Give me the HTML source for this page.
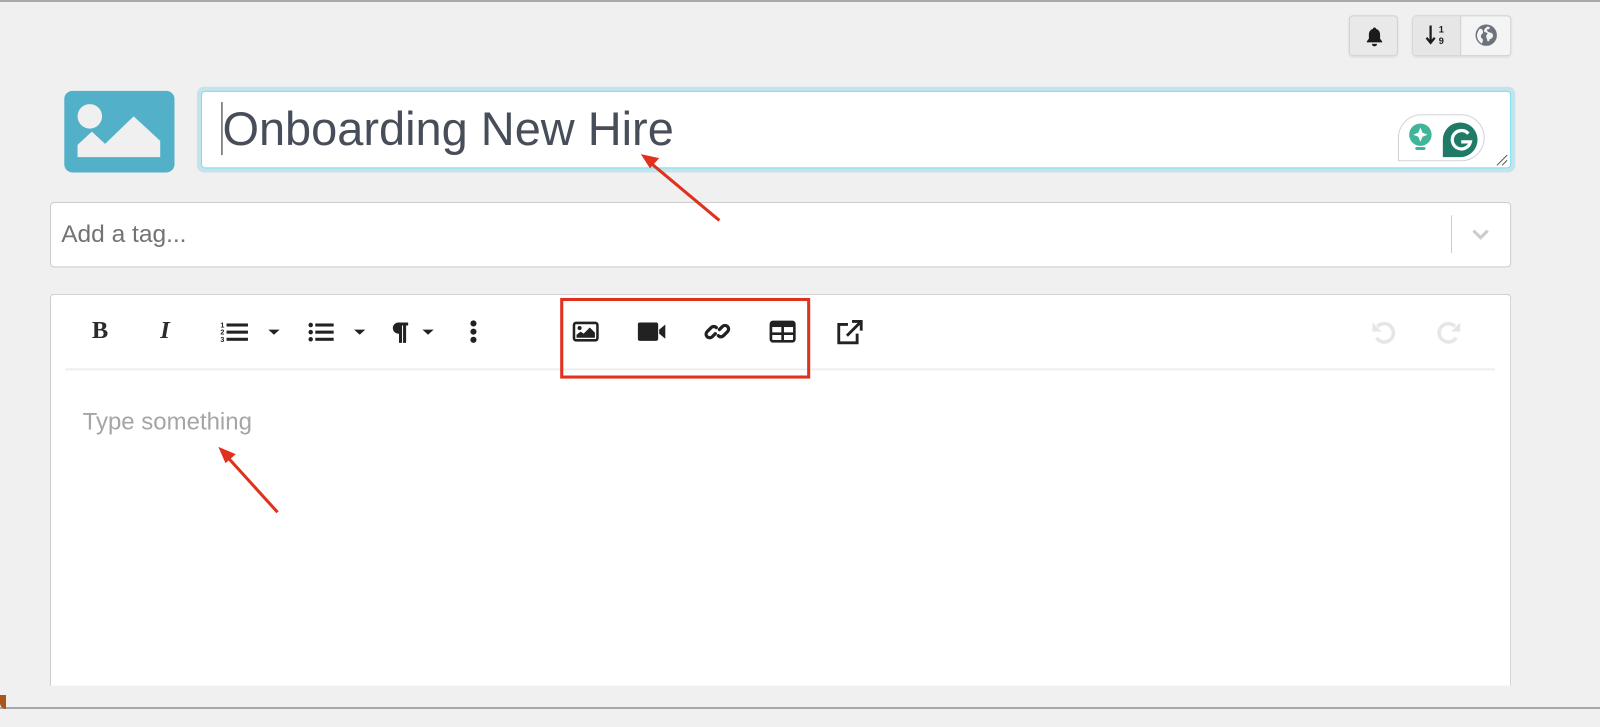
<!DOCTYPE html>
<html><head><meta charset="utf-8"><style>
*{box-sizing:border-box;margin:0;padding:0}
body{width:1600px;height:709px;background:#f0f0f0;position:relative;overflow:hidden;font-family:"Liberation Sans",sans-serif}
.a{position:absolute}
#w{position:absolute;left:0;top:0;width:1568px;height:695px;transform:scale(1.0204);transform-origin:0 0}
.btn{background:#e9e9e9;border:1px solid #cfd3d6;border-radius:4px;box-shadow:0 1px 2px rgba(0,0,0,.08)}
svg{display:block}
</style></head><body>
<div id="w">
<!-- top buttons -->
<div class="a btn" style="left:1322px;top:15px;width:48px;height:40px">
<svg class="a" style="left:15px;top:10px" width="18" height="20" viewBox="0 0 18 20"><path d="M9 1c1 0 1.5.6 1.5 1.3C13 3 14.5 5 14.5 8v4l2 2.5v1H1.5v-1l2-2.5V8C3.5 5 5 3 7.5 2.3 7.5 1.6 8 1 9 1z" fill="#1b1b1b"/><path d="M6.5 17h5a2.5 2.5 0 0 1-5 0z" fill="#1b1b1b"/></svg></div>
<div class="a btn" style="left:1384px;top:15px;width:97px;height:40px;background:#f4f4f4"></div>
<div class="a" style="left:1385px;top:16px;width:47px;height:38px;background:#e6e6e6;border-right:1px solid #cfd3d6"></div>
<svg class="a" style="left:1397px;top:23px" width="22" height="24" viewBox="0 0 22 24"><path d="M5 2v16M1 14l4 5 4-5" stroke="#1b1b1b" stroke-width="2.2" fill="none"/><text x="13" y="9" font-size="9" font-weight="bold" fill="#1b1b1b" font-family="Liberation Sans">1</text><text x="13" y="20" font-size="9" font-weight="bold" fill="#1b1b1b" font-family="Liberation Sans">9</text></svg>
<svg class="a" style="left:1446px;top:24px" width="21" height="21" viewBox="0 0 20 20"><circle cx="10" cy="10" r="10" fill="#6c737b"/><path d="M4 4c2 0 3 1 3 3s-2 2-2 4 2 2 2 4l-1 3C3 16 1 13 1.5 9 2 7 3 5 4 4zM11 2c2 0 3 1 2 2s-3 0-2 2 4 1 5 3 0 3-1 4-2 0-2 2c-1 1-2 1-2 0 0-2-1-2-1-4s2-2 1-3-3 0-3-2 2-3 3-4z" fill="#f4f4f4"/></svg>

<!-- image icon -->
<div class="a" style="left:63px;top:89px;width:108px;height:80px;background:#52b1c9;border-radius:8px"></div>
<svg class="a" style="left:63px;top:89px" width="108" height="80" viewBox="0 0 108 80"><circle cx="25" cy="25" r="12" fill="#f0f0f0"/><path d="M13 65V53l14-13 13 12 28-27 26 24v16z" fill="#f0f0f0"/></svg>

<!-- title -->
<div class="a" style="left:193px;top:85px;width:1292px;height:84px;border-radius:7px;background:#c5e3ea"></div>
<div class="a" style="left:197px;top:89px;width:1284px;height:76px;background:#fff;border:1px solid #6fe0f7;border-radius:4px"></div>
<div class="a" style="left:217px;top:100px;width:1px;height:52px;background:#222"></div>
<div class="a" style="left:218px;top:99px;font-size:46px;color:#474e59">Onboarding New Hire</div>
<div class="a" style="left:1370px;top:112px;width:85px;height:46px;border:1px solid #d0d3d8;border-radius:23px 23px 23px 0;background:#fff"></div>
<svg class="a" style="left:1379px;top:119px" width="30" height="34" viewBox="0 0 30 34"><circle cx="13" cy="13" r="11" fill="#3fb59a"/><path d="M13 6l2 5 5 2-5 2-2 5-2-5-5-2 5-2z" fill="#fff"/><rect x="8" y="25" width="10" height="3" rx="1.5" fill="#3fb59a"/></svg>
<svg class="a" style="left:1413px;top:119px" width="36" height="36" viewBox="0 0 36 36"><path d="M18 1a17 17 0 1 1 0 34H1V18A17 17 0 0 1 18 1z" fill="#1f7b66"/><path d="M26 12a9 9 0 1 0 2 8h-9" stroke="#fff" stroke-width="3.2" fill="none"/></svg>
<svg class="a" style="left:1466px;top:151px" width="12" height="12"><path d="M1 11L11 1M6 11L11 6" stroke="#555" stroke-width="1"/></svg>

<!-- tag -->
<div class="a" style="left:49px;top:198px;width:1432px;height:64px;background:#fff;border:1px solid #cccccc;border-radius:4px"></div>
<div class="a" style="left:60px;top:216px;font-size:24px;color:#737373">Add a tag...</div>
<div class="a" style="left:1422px;top:211px;width:1px;height:37px;background:#ccc"></div>
<svg class="a" style="left:1441px;top:223px" width="20" height="14"><path d="M3 3l7 7 7-7" stroke="#ccc" stroke-width="3" fill="none"/></svg>

<!-- editor -->
<div class="a" style="left:49px;top:288px;width:1432px;height:420px;background:#fff;border:1px solid #cccccc;border-radius:4px 4px 0 0;border-bottom:none"></div>
<div class="a" style="left:49px;top:672px;width:1432px;height:40px;background:#f0f0f0"></div>
<div class="a" style="left:64px;top:361px;width:1401px;height:2px;background:#eeeeee"></div>

<div class="a" style="left:90px;top:311px;font-size:24px;font-weight:bold;font-family:'Liberation Serif',serif;color:#2b2b2b">B</div>
<div class="a" style="left:157px;top:311px;font-size:24px;font-style:italic;font-weight:bold;font-family:'Liberation Serif',serif;color:#2b2b2b">I</div>
<svg class="a" style="left:216px;top:314px" width="70" height="24" viewBox="0 0 70 24"><text x="0" y="7" font-size="7" font-weight="bold" fill="#222">1</text><text x="0" y="14" font-size="7" font-weight="bold" fill="#222">2</text><text x="0" y="21" font-size="7" font-weight="bold" fill="#222">3</text><rect x="6" y="3" width="21" height="3" fill="#222"/><rect x="6" y="10" width="21" height="3" fill="#222"/><rect x="6" y="17" width="21" height="3" fill="#222"/><path d="M47 9h11l-5.5 5z" fill="#222"/></svg>
<svg class="a" style="left:302px;top:314px" width="64" height="24" viewBox="0 0 64 24"><circle cx="2.5" cy="4.5" r="2.2" fill="#222"/><circle cx="2.5" cy="11.5" r="2.2" fill="#222"/><circle cx="2.5" cy="18.5" r="2.2" fill="#222"/><rect x="7" y="3" width="18" height="3" fill="#222"/><rect x="7" y="10" width="18" height="3" fill="#222"/><rect x="7" y="17" width="18" height="3" fill="#222"/><path d="M45 9h11l-5.5 5z" fill="#222"/></svg>
<svg class="a" style="left:383px;top:314px" width="46" height="24" viewBox="0 0 46 24"><path d="M7 2h10v3h-2v17h-3V5h-1v17H8v-9a5.5 5.5 0 0 1-1-11z" fill="#222"/><path d="M31 9h11l-5.5 5z" fill="#222"/></svg>
<svg class="a" style="left:458px;top:313px" width="12" height="26"><circle cx="6" cy="4" r="3" fill="#222"/><circle cx="6" cy="12" r="3" fill="#222"/><circle cx="6" cy="20" r="3" fill="#222"/></svg>

<svg class="a" style="left:561px;top:315px" width="26" height="20" viewBox="0 0 26 20"><rect x="1.5" y="1.5" width="23" height="17" rx="2" fill="none" stroke="#222" stroke-width="2.5"/><circle cx="7" cy="6.5" r="2" fill="#222"/><path d="M4 16v-3l4-3 3 2 6-6 5 5v5z" fill="#222"/></svg>
<svg class="a" style="left:625px;top:315px" width="28" height="20" viewBox="0 0 28 20"><rect x="0" y="1" width="20" height="18" rx="2" fill="#222"/><path d="M21 8l6-5v14l-6-5z" fill="#222"/></svg>
<svg class="a" style="left:690px;top:312px" width="26" height="26" viewBox="0 0 26 26"><path d="M11 15l-3 3a3.5 3.5 0 0 1-5-5l4-4a3.5 3.5 0 0 1 5 0M15 11l3-3a3.5 3.5 0 0 1 5 5l-4 4a3.5 3.5 0 0 1-5 0" stroke="#222" stroke-width="3.2" fill="none" stroke-linecap="round"/></svg>
<svg class="a" style="left:754px;top:314px" width="26" height="22" viewBox="0 0 26 22"><rect x="1.5" y="1.5" width="23" height="19" rx="2" fill="none" stroke="#222" stroke-width="2.6"/><rect x="1.5" y="1.5" width="23" height="5" fill="#222"/><path d="M13 6v14M2 13h22" stroke="#222" stroke-width="2.6"/></svg>
<svg class="a" style="left:819px;top:313px" width="28" height="26" viewBox="0 0 28 26"><path d="M12 5H3v18h18v-9" stroke="#222" stroke-width="2.8" fill="none"/><path d="M11 16L24 3M16 2h9v9" stroke="#222" stroke-width="2.8" fill="none"/></svg>

<svg class="a" style="left:1342px;top:312px" width="28" height="28" viewBox="0 0 28 28"><path d="M8 8a9 9 0 1 1-1 11" stroke="#e6e6e6" stroke-width="3.5" fill="none"/><path d="M3 4v9h9z" fill="#e6e6e6"/></svg>
<svg class="a" style="left:1406px;top:312px" width="28" height="28" viewBox="0 0 28 28"><path d="M20 8a9 9 0 1 0 1 11" stroke="#e6e6e6" stroke-width="3.5" fill="none"/><path d="M25 4v9h-9z" fill="#e6e6e6"/></svg>

<div class="a" style="left:81px;top:400px;font-size:23.5px;color:#a5a5a5">Type something</div>

<!-- red annotations -->
<div class="a" style="left:549px;top:292px;width:245px;height:79px;border:3px solid #e0301e"></div>
<svg class="a" style="left:0;top:0" width="1600" height="709">
<g stroke="#e0301e" stroke-width="3" fill="#e0301e">
<line x1="705" y1="216" x2="638" y2="160"/>
<path d="M628 151l18 4-9 10z" stroke="none"/>
<line x1="272" y1="502" x2="223" y2="448"/>
<path d="M214 438l17 7-10 9z" stroke="none"/>
</g></svg>
</div>
<div class="a" style="left:0;top:0;width:1600px;height:2px;background:#a9a9a9"></div>
<div class="a" style="left:0;bottom:0;width:1600px;height:2px;background:#a9a9a9"></div>
<div class="a" style="left:0;bottom:0;width:6px;height:14px;background:#a8561a;border-radius:0 0 0 6px"></div>
</body></html>
